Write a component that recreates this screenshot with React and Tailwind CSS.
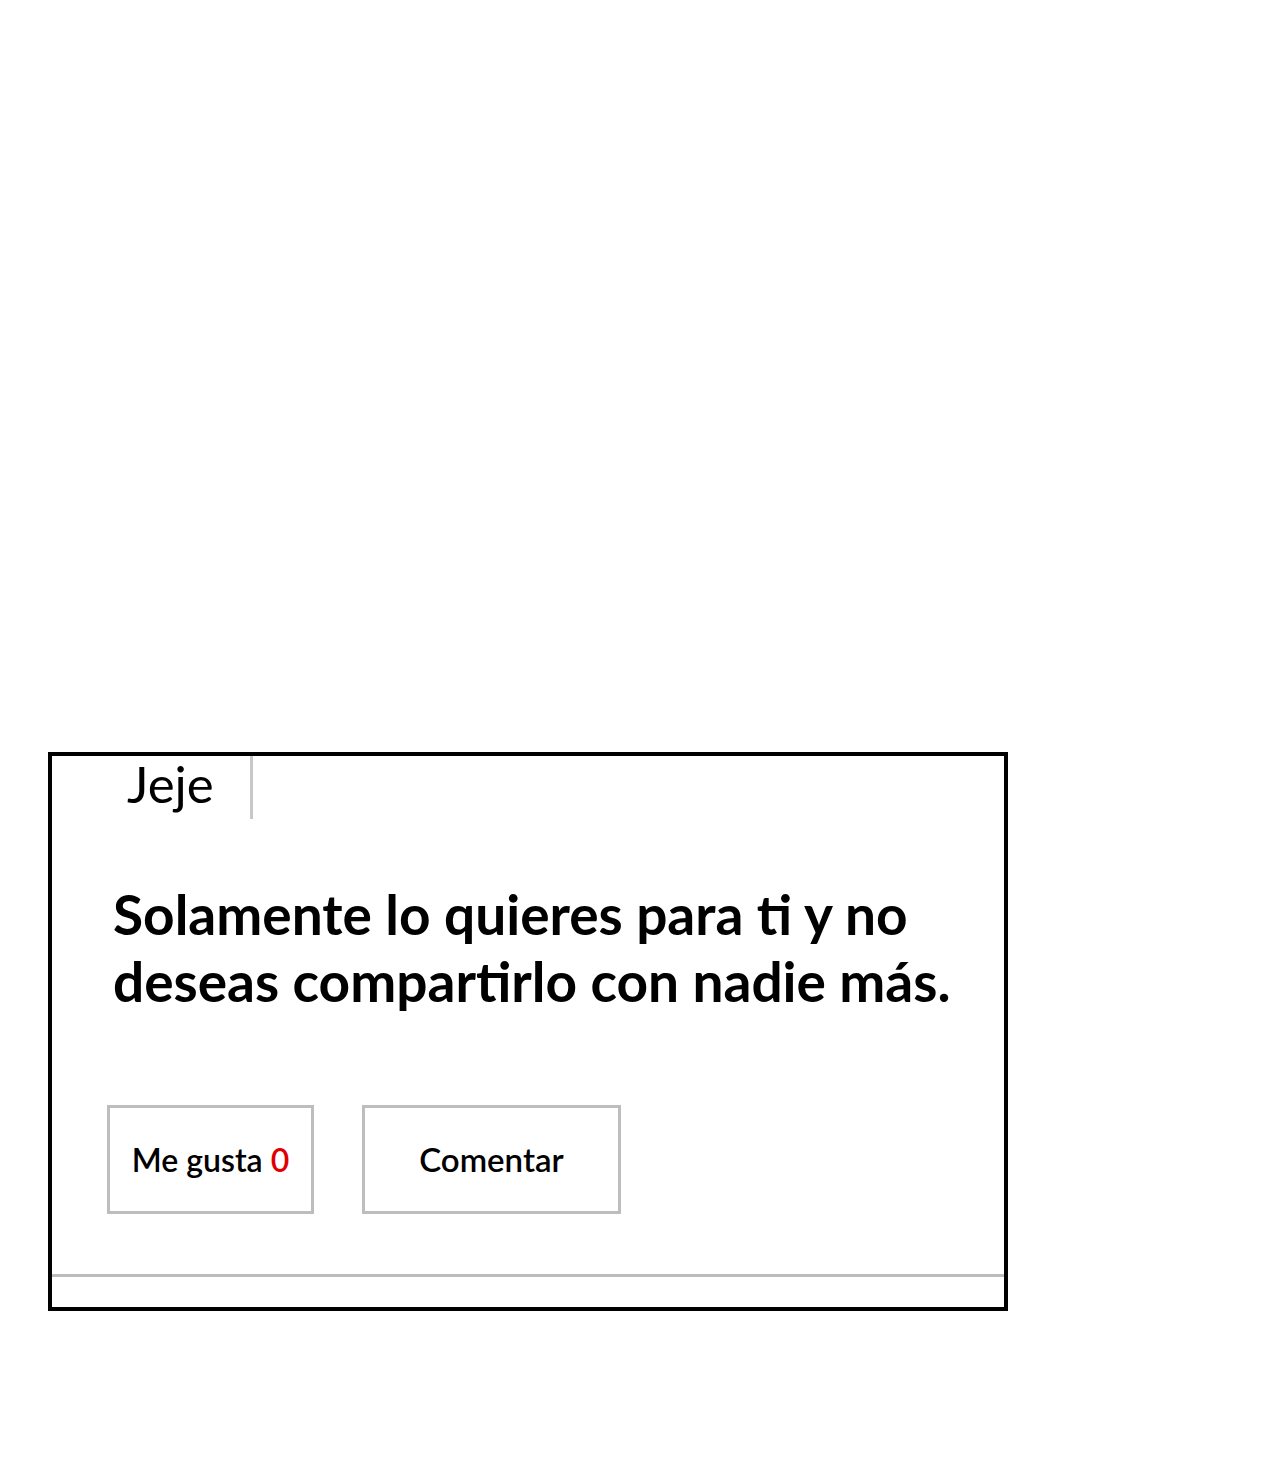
import React from "react";

const font = { fontFamily: '"Lato", "Open Sans", sans-serif' };

const App = () => {
  const likes = 0;

  return (
    <div className="min-h-[1479px] w-[1280px] bg-white pt-[752px] pl-[48px]" style={font}>
      <div className="flex h-[559px] w-[960px] flex-col border-[4px] border-black">
        <div className="flex h-[63px]">
          <div className="ml-[74px] flex w-[127px] items-center border-r-[3px] border-[#c8c8c8] pb-[8px] pl-[1px] text-[51px] leading-none text-black">
            Jeje
          </div>
        </div>

        <p className="mt-[62px] w-[900px] pl-[61px] text-[55px] font-bold leading-[67px] text-black">
          Solamente lo quieres para ti y no deseas compartirlo con nadie más.
        </p>

        <div className="mt-[90px] flex gap-[48px] pl-[55px]">
          <button className="flex h-[109px] w-[207px] items-center justify-center border-[3px] border-[#bdbdbd] bg-white text-[32px] font-semibold text-black">
            Me gusta&nbsp;<span className="text-[#e00000]">{likes}</span>
          </button>
          <button className="flex h-[109px] w-[259px] items-center justify-center border-[3px] border-[#bdbdbd] bg-white text-[33px] font-semibold text-black">
            Comentar
          </button>
        </div>

        <div className="mt-auto mb-[30px] h-[3px] w-full bg-[#bcbcbc]" />
      </div>
    </div>
  );
};

export default App;
